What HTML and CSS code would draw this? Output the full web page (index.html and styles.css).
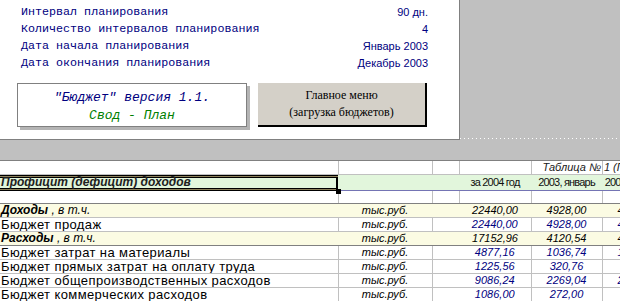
FILE: index.html
```html
<!DOCTYPE html>
<html lang="ru">
  <head>
    <meta charset="UTF-8" />
    <title>Бюджет - Свод - План</title>
    <link rel="stylesheet" href="styles.css">
  </head>
  <body>
    <div class="top">
      <div class="panel">
        <div class="params">
          <div class="param"><span class="param-name">Интервал планирования</span><span class="param-value">90 дн.</span></div>
          <div class="param"><span class="param-name">Количество интервалов планирования</span><span class="param-value">4</span></div>
          <div class="param"><span class="param-name">Дата начала планирования</span><span class="param-value">Январь 2003</span></div>
          <div class="param"><span class="param-name">Дата окончания планирования</span><span class="param-value">Декабрь 2003</span></div>
        </div>
        <div class="cards">
          <div class="version">
            <div class="version-title">"Бюджет" версия 1.1.</div>
            <div class="version-mode">Свод - План</div>
          </div>
          <div class="menu-button">Главное меню<br />(загрузка бюджетов)</div>
        </div>
      </div>
      <div class="side">
        <div class="dots"></div>
      </div>
    </div>

    <div class="sheet">
      <table class="grid">
        <colgroup>
          <col class="col-a" />
          <col class="col-b" />
          <col class="col-c" />
          <col class="col-d" />
          <col class="col-e" />
          <col class="col-f" />
        </colgroup>
        <tr class="row-blank">
          <td></td><td></td><td></td><td></td>
          <td class="caption"><span>Таблица № 1 (Профицит)</span></td>
          <td class="no-line"></td>
        </tr>
        <tr class="row-head">
          <td class="head-title">Профицит (дефицит) доходов<span class="handle"></span></td>
          <td></td><td></td>
          <td class="period">за 2004 год</td>
          <td class="period">2003, январь</td>
          <td class="period">2003, февраль</td>
        </tr>
        <tr class="row-blank row-sep">
          <td></td><td></td><td></td><td></td><td></td><td></td>
        </tr>
        <tr class="row-total">
          <td class="label"><b>Доходы</b> , в т.ч.</td>
          <td class="unit">тыс.руб.</td>
          <td></td>
          <td class="num">22440,00</td>
          <td class="num">4928,00</td>
          <td class="num">4928,00</td>
        </tr>
        <tr class="row-item">
          <td class="label">Бюджет продаж</td>
          <td class="unit">тыс.руб.</td>
          <td class="merge"></td>
          <td class="num">22440,00</td>
          <td class="num">4928,00</td>
          <td class="num">4928,00</td>
        </tr>
        <tr class="row-total row-strong">
          <td class="label"><b>Расходы</b> , в т.ч.</td>
          <td class="unit">тыс.руб.</td>
          <td></td>
          <td class="num">17152,96</td>
          <td class="num">4120,54</td>
          <td class="num">4120,54</td>
        </tr>
        <tr class="row-item">
          <td class="label">Бюджет затрат на материалы</td>
          <td class="unit">тыс.руб.</td>
          <td class="merge"></td>
          <td class="num">4877,16</td>
          <td class="num">1036,74</td>
          <td class="num">1036,74</td>
        </tr>
        <tr class="row-item">
          <td class="label">Бюджет прямых затрат на оплату труда</td>
          <td class="unit">тыс.руб.</td>
          <td class="merge"></td>
          <td class="num">1225,56</td>
          <td class="num">320,76</td>
          <td class="num">320,76</td>
        </tr>
        <tr class="row-item">
          <td class="label">Бюджет общепроизводственных расходов</td>
          <td class="unit">тыс.руб.</td>
          <td class="merge"></td>
          <td class="num">9086,24</td>
          <td class="num">2269,04</td>
          <td class="num">2269,04</td>
        </tr>
        <tr class="row-item">
          <td class="label">Бюджет коммерческих расходов</td>
          <td class="unit">тыс.руб.</td>
          <td class="merge"></td>
          <td class="num">1086,00</td>
          <td class="num">272,00</td>
          <td class="num">272,00</td>
        </tr>
      </table>
    </div>
  </body>
</html>
```

FILE: styles.css
```css
* {
  box-sizing: border-box;
  margin: 0;
  padding: 0;
}

body {
  width: 620px;
  height: 301px;
  overflow: hidden;
  background-color: #ffffff;
  font-family: "Liberation Sans", Arial, sans-serif;
  font-size: 11px;
  color: #000000;
}

/* top part: parameters sheet on a gray window */
.top {
  display: flex;
  height: 161px;
  background-color: #c0c0c0;
  border-bottom: 1px solid #808080;
}

.panel {
  width: 460px;
  height: 140px;
  flex-shrink: 0;
  background-color: #ffffff;
  border-right: 1px solid #808080;
  border-bottom: 1px solid #808080;
}

.side {
  flex: 1;
  height: 139px;
  display: flex;
  flex-direction: column;
  justify-content: flex-end;
}

.dots {
  height: 1px;
  background-image: repeating-linear-gradient(90deg, #ffffff 0 1px, transparent 1px 4px);
}

.params {
  padding: 4px 31px 0 21px;
}

.param {
  display: flex;
  justify-content: space-between;
  height: 17px;
  line-height: 17px;
  color: #000080;
}

.param-name {
  font-family: "Liberation Mono", "Courier New", monospace;
  font-size: 11.7px;
}

.param-value {
  font-size: 11px;
}

.cards {
  display: flex;
  gap: 11px;
  margin-top: 11px;
  padding-left: 17px;
}

.version {
  width: 230px;
  height: 44px;
  padding-top: 5px;
  border: 1px solid #808080;
  box-shadow: 3px 3px 0 #b4b4b4;
  text-align: center;
  font-family: "Liberation Mono", "Courier New", monospace;
  font-style: italic;
  font-size: 13px;
  line-height: 18px;
}

.version-title {
  color: #000080;
}

.version-mode {
  color: #008000;
}

.menu-button {
  width: 169px;
  height: 44px;
  padding-top: 4px;
  background-color: #d4d0c8;
  border-right: 2px solid #000000;
  border-bottom: 2px solid #000000;
  text-align: center;
  font-family: "Liberation Serif", "Times New Roman", serif;
  font-size: 12px;
  line-height: 17px;
  color: #000000;
}

/* spreadsheet */
.sheet {
  width: 620px;
  overflow: hidden;
}

.grid {
  table-layout: fixed;
  width: 673px;
  border-collapse: collapse;
}

.col-a { width: 338px; }
.col-b { width: 94px; }
.col-c { width: 27px; }
.col-d { width: 72px; }
.col-e { width: 71px; }
.col-f { width: 71px; }

.grid td {
  height: 14px;
  padding: 0 1px;
  line-height: 13px;
  white-space: nowrap;
  overflow: hidden;
  text-align: center;
  vertical-align: middle;
  border-bottom: 1px solid #c0c0c0;
  border-right: 1px solid #c0c0c0;
}

.grid td:first-child {
  text-align: left;
}

.grid .label {
  font-size: 13px;
  letter-spacing: 0.4px;
  color: #000000;
}

.row-blank td {
  height: 13px;
}

.grid .caption {
  overflow: visible;
  text-align: left;
  padding-left: 11px;
  font-style: italic;
  color: #202020;
}

.grid .no-line {
  border-right: none;
}

.row-head td {
  height: 16px;
  background-color: #e2f6dc;
  border-right: none;
  border-top: 1px solid #7474b4;
  border-bottom: 1px solid #7474b4;
  color: #101010;
}

.grid .period {
  letter-spacing: -0.8px;
}

.grid .head-title {
  position: relative;
  overflow: visible;
  border: none;
  padding-left: 1px;
  font-size: 12px;
  font-weight: bold;
  font-style: italic;
  color: #202020;
  box-shadow:
    inset 0 1px 0 #000000,
    inset 0 2px 0 #8c805a,
    inset 0 3px 0 #000000,
    inset 0 -1px 0 #000000,
    inset 0 -2px 0 #8c805a,
    inset 0 -3px 0 #000000,
    inset -2px 0 0 #000000;
}

.handle {
  position: absolute;
  right: -3px;
  bottom: -3px;
  width: 5px;
  height: 5px;
  background-color: #000000;
}

.row-sep td {
  border-bottom-color: #808080;
}

.row-total td {
  background-color: #fbfbe3;
  border-right: none;
}

.grid .row-total .label {
  font-size: 12px;
  font-style: italic;
  letter-spacing: 0;
}

.row-strong td {
  border-bottom-color: #808080;
}

.unit {
  font-style: italic;
}

.num {
  font-style: italic;
}

.row-item .num {
  color: #000080;
}

.grid .merge {
  border-right: none;
}
```
